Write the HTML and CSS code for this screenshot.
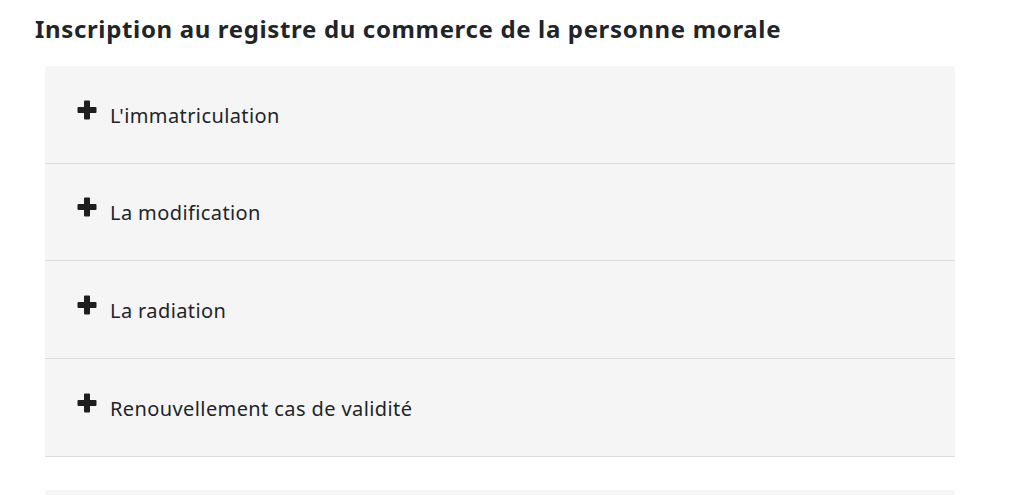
FILE: index.html
```html
<!DOCTYPE html>
<html lang="fr">
<head>
<meta charset="utf-8">
<title>Inscription au registre du commerce</title>
<link rel="stylesheet" href="styles.css">
</head>
<body>
<main class="page">
  <h2 class="title">Inscription au registre du commerce de la personne morale</h2>
  <div class="accordion">
    <div class="item">
      <svg class="plus" viewBox="0 0 20 20" aria-hidden="true"><path d="M7 1.5a1 1 0 0 1 1-1h4a1 1 0 0 1 1 1v5.5h5.5a1 1 0 0 1 1 1v4a1 1 0 0 1-1 1h-5.5v5.5a1 1 0 0 1-1 1h-4a1 1 0 0 1-1-1v-5.5h-5.5a1 1 0 0 1-1-1v-4a1 1 0 0 1 1-1h5.5z"/></svg>
      <span class="label">L'immatriculation</span>
    </div>
    <div class="item">
      <svg class="plus" viewBox="0 0 20 20" aria-hidden="true"><path d="M7 1.5a1 1 0 0 1 1-1h4a1 1 0 0 1 1 1v5.5h5.5a1 1 0 0 1 1 1v4a1 1 0 0 1-1 1h-5.5v5.5a1 1 0 0 1-1 1h-4a1 1 0 0 1-1-1v-5.5h-5.5a1 1 0 0 1-1-1v-4a1 1 0 0 1 1-1h5.5z"/></svg>
      <span class="label">La modification</span>
    </div>
    <div class="item">
      <svg class="plus" viewBox="0 0 20 20" aria-hidden="true"><path d="M7 1.5a1 1 0 0 1 1-1h4a1 1 0 0 1 1 1v5.5h5.5a1 1 0 0 1 1 1v4a1 1 0 0 1-1 1h-5.5v5.5a1 1 0 0 1-1 1h-4a1 1 0 0 1-1-1v-5.5h-5.5a1 1 0 0 1-1-1v-4a1 1 0 0 1 1-1h5.5z"/></svg>
      <span class="label">La radiation</span>
    </div>
    <div class="item">
      <svg class="plus" viewBox="0 0 20 20" aria-hidden="true"><path d="M7 1.5a1 1 0 0 1 1-1h4a1 1 0 0 1 1 1v5.5h5.5a1 1 0 0 1 1 1v4a1 1 0 0 1-1 1h-5.5v5.5a1 1 0 0 1-1 1h-4a1 1 0 0 1-1-1v-5.5h-5.5a1 1 0 0 1-1-1v-4a1 1 0 0 1 1-1h5.5z"/></svg>
      <span class="label">Renouvellement cas de validité</span>
    </div>
  </div>
  <div class="accordion next"></div>
</main>
</body>
</html>
```

FILE: styles.css
```css
html, body {
  margin: 0;
  padding: 0;
  background: #ffffff;
}
body {
  font-family: "Noto Sans", "Open Sans", Arial, sans-serif;
  color: #212529;
  overflow: hidden;
  height: 495px;
}
.page {
  padding: 0 69px 0 35px;
}
.title {
  margin: 0;
  padding-top: 13px;
  height: 66px;
  box-sizing: border-box;
  font-size: 24px;
  line-height: 32px;
  font-weight: 700;
  color: #212529;
  letter-spacing: 0.65px;
}
.accordion {
  margin-left: 10px;
  width: 910px;
  background: #f5f5f5;
  border-radius: 4px 4px 0 0;
}
.item {
  display: flex;
  align-items: center;
  gap: 13px;
  height: 97.67px;
  padding: 3px 32px 0;
  box-sizing: border-box;
  border-bottom: 1px solid #dcdcdc;
}
.plus {
  width: 20px;
  height: 20px;
  fill: #1e1e1e;
  flex: none;
  margin-top: -12px;
}
.label {
  font-size: 20px;
  line-height: 28px;
  color: #212529;
  letter-spacing: 0.4px;
}
.next {
  margin-top: 33px;
  height: 5px;
  border-radius: 4px 4px 0 0;
}
```
